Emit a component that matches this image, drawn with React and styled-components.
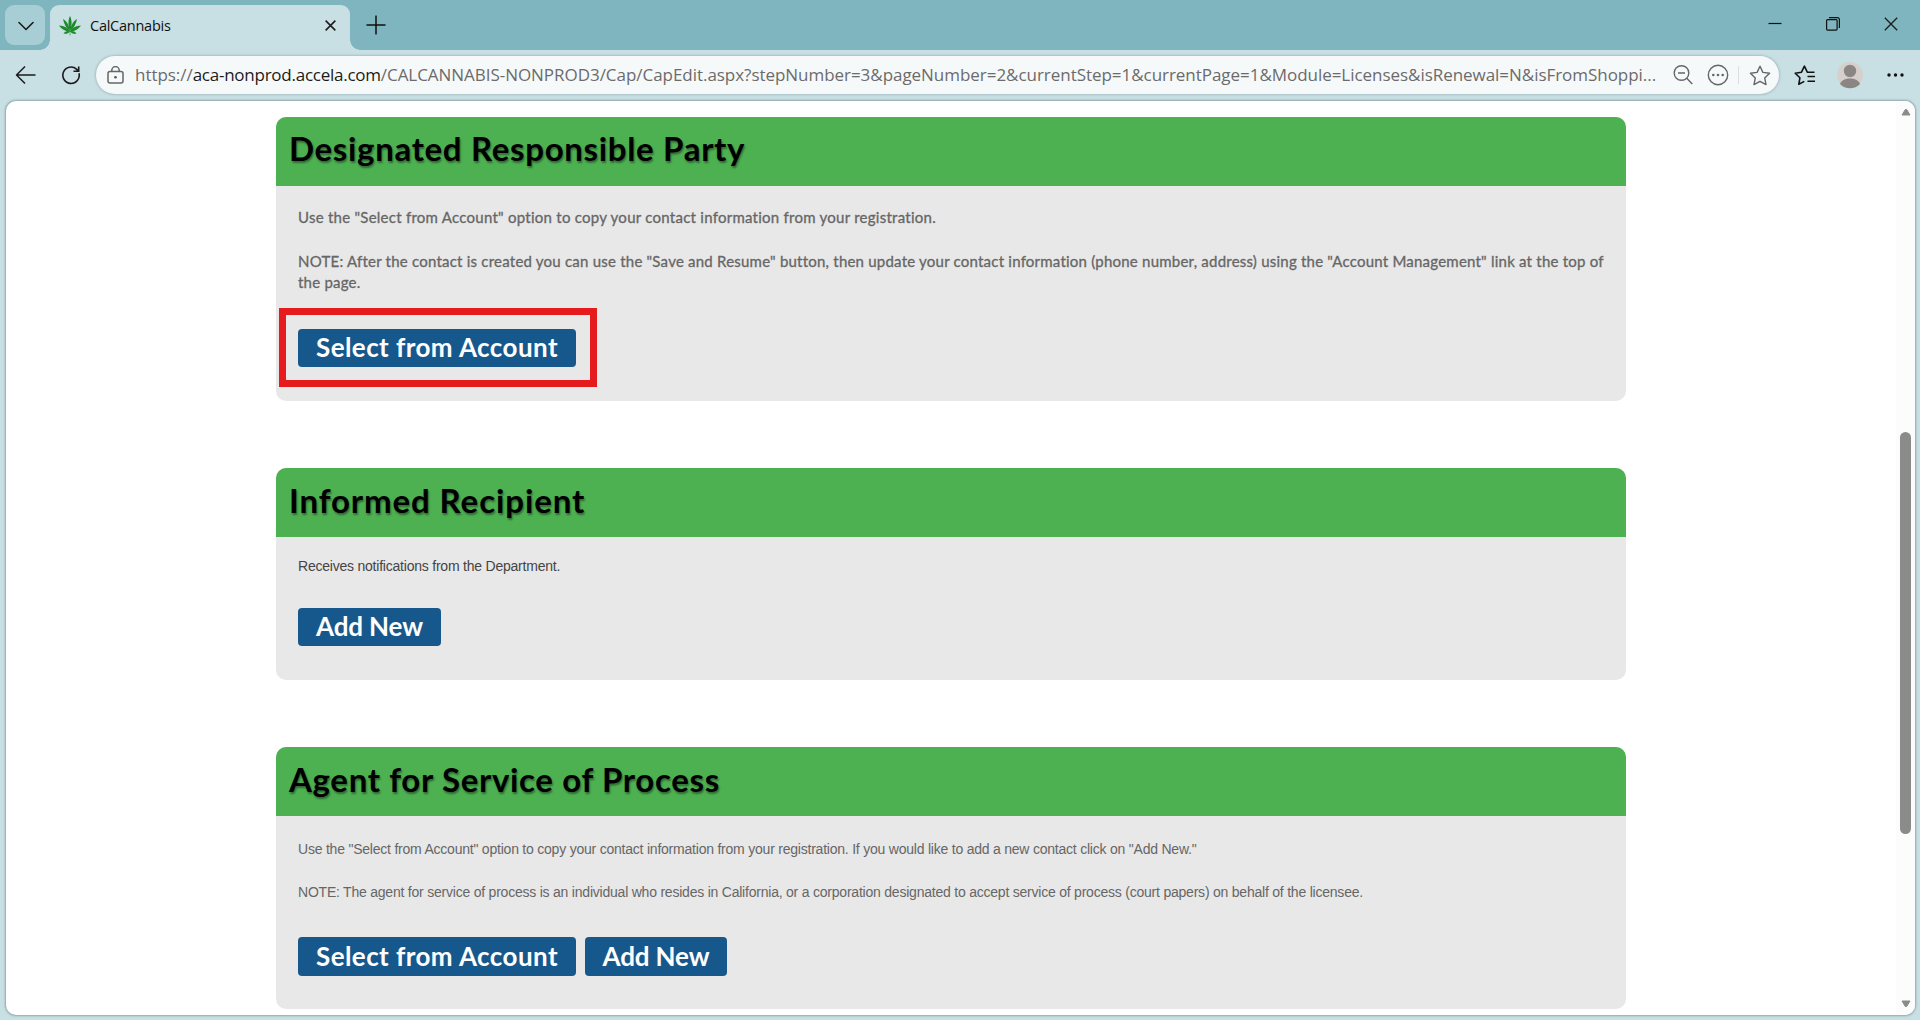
import React from 'react';
import styled, { createGlobalStyle } from 'styled-components'

const GlobalStyle = createGlobalStyle`
  * {
    box-sizing: border-box;
  }

  body {
    margin: 0;
    overflow: hidden;
    background: #c8dfe3;
    font-family: 'Open Sans', 'Noto Sans', sans-serif;
  }
`;

const Window = styled.div`
  display: flex;
  flex-direction: column;
  width: 1920px;
  height: 1020px;
  background: #c8dfe3;
`;

const TabBar = styled.div`
  display: flex;
  height: 50px;
  padding: 5px 0 0 5px;
  background: #7eb5bf;
`;

const TabMenu = styled.button`
  display: flex;
  align-items: center;
  justify-content: center;
  width: 40px;
  height: 40px;
  padding: 2px 0 0 1px;
  border: 0;
  border-radius: 9px;
  background: #a8ced5;
`;

const Tab = styled.div`
  position: relative;
  display: flex;
  align-items: center;
  width: 300px;
  height: 45px;
  margin-left: 5px;
  padding: 0 14px 4px 9px;
  border-radius: 9px 9px 0 0;
  background: #c8dfe3;

  /* flared feet of the active tab */
  &::before,
  &::after {
    content: '';
    position: absolute;
    bottom: 0;
    width: 10px;
    height: 10px;
  }

  &::before {
    left: -10px;
    background: radial-gradient(circle at 0 0, transparent 9.5px, #c8dfe3 10px);
  }

  &::after {
    right: -10px;
    background: radial-gradient(circle at 100% 0, transparent 9.5px, #c8dfe3 10px);
  }
`;

const TabTitle = styled.span`
  flex: 1;
  margin-left: 9px;
  color: #111;
  font-size: 14.5px;
  letter-spacing: -0.25px;
`;

const NewTab = styled.div`
  display: flex;
  margin: 10px 0 0 16px;
`;

const WindowControls = styled.div`
  display: flex;
  gap: 44px;
  margin: 12px 22px 0 auto;
`;

const Toolbar = styled.div`
  display: flex;
  align-items: center;
  height: 51px;
  padding: 0 16px 1px 15px;
`;

const Back = styled.div`
  display: flex;
  margin-right: 24px;
`;

const Reload = styled.div`
  display: flex;
  margin-right: 15px;
`;

const AddressBar = styled.div`
  display: flex;
  align-items: center;
  width: 1683px;
  height: 38px;
  padding: 0 8px 0 11px;
  border-radius: 19px;
  background: #f6f9fa;
  box-shadow: 0 0 2px 1px rgba(100, 120, 125, 0.3);
`;

const Url = styled.div`
  margin-left: 11px;
  padding-bottom: 1px;
  color: #6b6b6b;
  font-size: 17px;
  letter-spacing: -0.04px;
  white-space: nowrap;

  b {
    color: #1b1b1b;
    font-weight: 400;
    letter-spacing: -0.25px;
  }
`;

const AddressIcons = styled.div`
  display: flex;
  align-items: center;
  margin-left: auto;
`;

const ZoomOut = styled.div`
  display: flex;
  margin-right: 14px;
`;

const Divider = styled.div`
  width: 1px;
  height: 18px;
  margin: 0 10px 0 9px;
  background: #dcdfe0;
`;

const ToolbarIcons = styled.div`
  display: flex;
  align-items: center;
  margin-left: auto;
`;

const Avatar = styled.div`
  display: flex;
  margin: 0 24px 0 21px;
`;

const Viewport = styled.div`
  display: flex;
  width: 1909px;
  height: 914px;
  margin-left: 6px;
  border-radius: 10px;
  overflow: hidden;
  background: #fff;
  box-shadow: 0 0 2px 1px rgba(90, 115, 120, 0.5);
`;

const Page = styled.main`
  flex: 1;
  padding: 16px 0 0 270px;
`;

const Scrollbar = styled.div`
  display: flex;
  flex-direction: column;
  align-items: center;
  width: 19px;
  padding: 7px 0;
  background: #fcfcfc;
`;

const Thumb = styled.div`
  width: 11px;
  height: 402px;
  margin: 316px 0 auto;
  border-radius: 6px;
  background: #8b8b8b;
`;

const Section = styled.section`
  display: flex;
  flex-direction: column;
  width: 1350px;
  height: ${props => props.$height}px;
  margin-bottom: 67px;
  border-radius: 10px;
  overflow: hidden;
  background: #e8e8e8;
`;

const SectionHeader = styled.h1`
  height: 69px;
  margin: 0;
  padding-left: 13px;
  background: #4db151;
  color: #000;
  font: 700 33px/${props => props.$line}px Lato, sans-serif;
  letter-spacing: ${props => props.$spacing}px;
  text-shadow: 1px 2px 2px rgba(0, 0, 0, 0.4);
`;

const SectionBody = styled.div`
  padding: ${props => props.$top}px 22px 0;
`;

const Text = styled.p`
  margin: 0 0 ${props => props.$gap}px;
  color: ${props => props.$color || '#666'};
  font: 400 14px/21px 'Liberation Sans', Arial, sans-serif;
  letter-spacing: -0.22px;
  white-space: nowrap;
`;

const LatoText = styled(Text)`
  font: 400 15px/21px Lato, sans-serif;
  letter-spacing: ${props => props.$spacing}px;
  -webkit-text-stroke: 0.3px #666;
`;

const Actions = styled.div`
  display: flex;
  gap: 9px;
`;

const Button = styled.button`
  width: ${props => props.$width}px;
  height: ${props => props.$height || 38}px;
  padding: 0 0 2px;
  border: 0;
  border-radius: 4px;
  background: #17588c;
  color: #fff;
  font: 700 26px/36px Lato, sans-serif;
  letter-spacing: ${props => props.$spacing || 0}px;
  white-space: nowrap;
`;

const Highlight = styled.div`
  width: 318px;
  height: 79px;
  margin-left: -19px;
  padding: 14px 12px;
  border: 7px solid #e61b1e;
`;

const ChevronIcon = () => (
  <svg width="16" height="10" viewBox="0 0 16 10" fill="none" stroke="#1b1b1b" strokeWidth="1.6" strokeLinecap="round" strokeLinejoin="round">
    <path d="M1 1.5 8 8.5 15 1.5" />
  </svg>
);

const LeafIcon = () => (
  <svg width="22" height="20" viewBox="0 0 22 20" fill="#1d8a2b">
    <path d="M11 0C13 4 13.2 9 11 15.5C8.8 9 9 4 11 0Z" />
    <path d="M4 3C8 5.5 10 9 11 15.5C7 12 5 8 4 3Z" />
    <path d="M18 3C14 5.5 12 9 11 15.5C15 12 17 8 18 3Z" />
    <path d="M0 9.5C5 9.5 8.5 11.5 11 15.5C6.5 15.5 3 13.5 0 9.5Z" />
    <path d="M22 9.5C17 9.5 13.5 11.5 11 15.5C15.5 15.5 19 13.5 22 9.5Z" />
    <path d="M4.5 17.5C6.5 15.2 8.5 14.8 11 15.3C9 17.8 7 18.3 4.5 17.5Z" />
    <path d="M17.5 17.5C15.5 15.2 13.5 14.8 11 15.3C13 17.8 15 18.3 17.5 17.5Z" />
    <path d="M10.7 15h.6v4.5h-.6z" />
  </svg>
);

const CloseIcon = ({ size = 11, width = 1.7, color = '#1b1b1b' }) => (
  <svg width={size} height={size} viewBox="0 0 12 12" stroke={color} strokeWidth={width}>
    <path d="M.7.7 11.3 11.3M11.3.7.7 11.3" />
  </svg>
);

const PlusIcon = () => (
  <svg width="20" height="20" viewBox="0 0 20 20" stroke="#111" strokeWidth="1.5">
    <path d="M10 .5V19.5M.5 10H19.5" />
  </svg>
);

const MinimizeIcon = () => (
  <svg width="14" height="14" viewBox="0 0 14 14" stroke="#111" strokeWidth="1.2">
    <path d="M.5 6.5H13.5" />
  </svg>
);

const RestoreIcon = () => (
  <svg width="14" height="14" viewBox="0 0 14 14" fill="none" stroke="#111" strokeWidth="1.2">
    <rect x=".6" y="2.6" width="10.5" height="10.5" rx="1" />
    <path d="M3 .6H11.5A2 2 0 0 1 13.4 2.6V11" />
  </svg>
);

const BackIcon = () => (
  <svg width="22" height="20" viewBox="0 0 22 20" fill="none" stroke="#1b1b1b" strokeWidth="1.5" strokeLinejoin="round">
    <path d="M20.5 10H1.5M10 1.5 1.5 10 10 18.5" />
  </svg>
);

const ReloadIcon = () => (
  <svg width="20" height="20" viewBox="0 0 20 20" fill="none" stroke="#1b1b1b" strokeWidth="1.6">
    <path d="M18 8.2A8.2 8.2 0 1 1 15.5 4.1L17.5 6M17.7 1.5V6.2H12.5" />
  </svg>
);

const LockIcon = () => (
  <svg width="17" height="18" viewBox="0 0 17 18" fill="none" stroke="#666" strokeWidth="1.5">
    <rect x="1" y="5.5" width="15" height="11.5" rx="2" />
    <path d="M4.8 5.5V4.3A3.6 3.6 0 0 1 12.2 4.3V5.5" />
    <circle cx="8.5" cy="11.2" r="1.3" fill="#555" stroke="none" />
  </svg>
);

const ZoomOutIcon = () => (
  <svg width="20" height="20" viewBox="0 0 20 20" fill="none" stroke="#666" strokeWidth="1.4">
    <circle cx="8.5" cy="8" r="7.3" />
    <path d="M5 8H12M13.7 13.3 19.3 19" />
  </svg>
);

const MoreCircleIcon = () => (
  <svg width="22" height="22" viewBox="0 0 22 22" fill="#666">
    <circle cx="11" cy="11" r="9.7" fill="none" stroke="#666" strokeWidth="1.4" />
    <circle cx="6.3" cy="11" r="1.3" />
    <circle cx="11" cy="11" r="1.3" />
    <circle cx="15.7" cy="11" r="1.3" />
  </svg>
);

const StarIcon = () => (
  <svg width="22" height="21" viewBox="0 0 22 21" fill="none" stroke="#666" strokeWidth="1.4" strokeLinejoin="round">
    <path d="M11 1.2 13.9 7.4 20.6 8.2 15.7 12.9 17 19.6 11 16.3 5 19.6 6.3 12.9 1.4 8.2 8.1 7.4Z" />
  </svg>
);

const FavoritesIcon = () => (
  <svg width="22" height="21" viewBox="0 0 22 21" fill="none" stroke="#111" strokeWidth="1.6" strokeLinejoin="round">
    <path d="M20.5 7.2H13.3L10.4 1.2 7.5 7.2 1.2 8.2 5.9 12.8 4.8 19.3 10.3 16.4" />
    <path d="M13.5 11.5H21M13.5 16.2H21" />
  </svg>
);

const AvatarIcon = () => (
  <svg width="26" height="28" viewBox="0 0 26 28">
    <circle cx="13" cy="14" r="13" fill="#d5d0cc" />
    <circle cx="13" cy="10" r="6.2" fill="#8b8683" />
    <path d="M3 23C4.5 19 8.5 17.5 13 17.5S21.5 19 23 23C20 26 17 27.3 13 27.3S6 26 3 23Z" fill="#8b8683" />
  </svg>
);

const DotsIcon = () => (
  <svg width="17" height="4" viewBox="0 0 17 4" fill="#111">
    <circle cx="2" cy="2" r="1.7" />
    <circle cx="8.5" cy="2" r="1.7" />
    <circle cx="15" cy="2" r="1.7" />
  </svg>
);

const ScrollArrow = ({ down }) => (
  <svg width="10" height="8" viewBox="0 0 10 8" fill="#8b8b8b" stroke="#8b8b8b" strokeLinejoin="round">
    <path d={down ? 'M1 1H9L5.7 6.5H4.3Z' : 'M1 7H9L5.7 1.5H4.3Z'} />
  </svg>
);

const Browser = () => (
  <>
    <TabBar>
      <TabMenu><ChevronIcon /></TabMenu>
      <Tab>
        <LeafIcon />
        <TabTitle>CalCannabis</TabTitle>
        <CloseIcon />
      </Tab>
      <NewTab><PlusIcon /></NewTab>
      <WindowControls>
        <MinimizeIcon />
        <RestoreIcon />
        <CloseIcon size={14} width={1.1} />
      </WindowControls>
    </TabBar>
    <Toolbar>
      <Back><BackIcon /></Back>
      <Reload><ReloadIcon /></Reload>
      <AddressBar>
        <LockIcon />
        <Url>
          https://<b>aca-nonprod.accela.com</b>/CALCANNABIS-NONPROD3/Cap/CapEdit.aspx?stepNumber=3&amp;pageNumber=2&amp;currentStep=1&amp;currentPage=1&amp;Module=Licenses&amp;isRenewal=N&amp;isFromShoppi...
        </Url>
        <AddressIcons>
          <ZoomOut><ZoomOutIcon /></ZoomOut>
          <MoreCircleIcon />
          <Divider />
          <StarIcon />
        </AddressIcons>
      </AddressBar>
      <ToolbarIcons>
        <FavoritesIcon />
        <Avatar><AvatarIcon /></Avatar>
        <DotsIcon />
      </ToolbarIcons>
    </Toolbar>
  </>
);

export default function App() {
  return (
    <Window>
      <GlobalStyle />
      <Browser />
      <Viewport>
        <Page>
          <Section $height={284}>
            <SectionHeader $line={63} $spacing={0.68}>Designated Responsible Party</SectionHeader>
            <SectionBody $top={21}>
              <LatoText $gap={23} $spacing={0.255}>Use the "Select from Account" option to copy your contact information from your registration.</LatoText>
              <LatoText $gap={15} $spacing={0.222}>
                NOTE: After the contact is created you can use the "Save and Resume" button, then update your contact information (phone number, address) using the "Account Management" link at the top of<br />
                the page.
              </LatoText>
              <Highlight>
                <Button $width={278} $spacing={0.43}>Select from Account</Button>
              </Highlight>
            </SectionBody>
          </Section>
          <Section $height={212}>
            <SectionHeader $line={64} $spacing={0.9}>Informed Recipient</SectionHeader>
            <SectionBody $top={19}>
              <Text $gap={31} $color="#444">Receives notifications from the Department.</Text>
              <Button $width={143} $spacing={-0.15}>Add New</Button>
            </SectionBody>
          </Section>
          <Section $height={262}>
            <SectionHeader $line={65} $spacing={0.66}>Agent for Service of Process</SectionHeader>
            <SectionBody $top={23}>
              <Text $gap={22}>Use the "Select from Account" option to copy your contact information from your registration. If you would like to add a new contact click on "Add New."</Text>
              <Text $gap={34}>NOTE: The agent for service of process is an individual who resides in California, or a corporation designated to accept service of process (court papers) on behalf of the licensee.</Text>
              <Actions>
                <Button $width={278} $height={39} $spacing={0.43}>Select from Account</Button>
                <Button $width={142} $height={39} $spacing={-0.15}>Add New</Button>
              </Actions>
            </SectionBody>
          </Section>
        </Page>
        <Scrollbar>
          <ScrollArrow />
          <Thumb />
          <ScrollArrow down />
        </Scrollbar>
      </Viewport>
    </Window>
  );
}
